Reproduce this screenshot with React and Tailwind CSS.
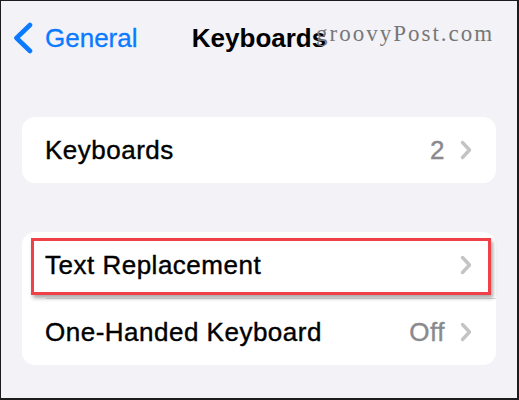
import React from 'react'

function Chevron() {
  return (
    <svg width="12" height="20" viewBox="0 0 12 20" fill="none" stroke="#c4c4c7" strokeWidth="3.4" strokeLinecap="round" strokeLinejoin="round">
      <polyline points="2.5,2.5 9.5,10 2.5,17.5" />
    </svg>
  )
}

function Row({ label, value, highlight }) {
  return (
    <div className="relative h-[66px] flex items-center pl-[23px] pr-[24px]">
      <span className="flex-1 text-[26px] tracking-[0.5px] text-black leading-none [-webkit-text-stroke:0.4px]">{label}</span>
      {value && (
        <span className="text-[26px] tracking-[0.5px] text-[#8a8a8e] leading-none mr-[15px] [-webkit-text-stroke:0.4px]">{value}</span>
      )}
      <Chevron />
      {highlight && (
        <div className="absolute left-[9px] right-[5px] top-[6px] h-[57px] border-[3px] border-[#ef4147] shadow-[2px_3px_4px_rgba(0,0,0,0.35)]" />
      )}
    </div>
  )
}

export default function App() {
  return (
    <div
      className="relative w-[519px] h-[400px] overflow-hidden bg-[#f2f2f7] border-t border-l border-r-2 border-b-2 border-[#1c1c1c]"
      style={{ fontFamily: '"Liberation Sans", Arial, sans-serif' }}
    >
      {/* nav bar */}
      <div className="grid grid-cols-[1fr_auto_1fr] items-center h-[74px]">
        <div className="flex items-center pl-[12px] gap-[12px] text-[#0a7aff]">
          <svg width="20" height="32" viewBox="0 0 20 32" fill="none" stroke="#0a7aff" strokeWidth="4.6" strokeLinecap="round" strokeLinejoin="round">
            <polyline points="17,3 3.5,16 17,29" />
          </svg>
          <span className="text-[26px] leading-none [-webkit-text-stroke:0.3px]">General</span>
        </div>
        <span className="text-[26px] font-bold text-black leading-none">Keyboards</span>
        <div />
      </div>

      {/* watermark */}
      <span
        className="absolute left-[315px] top-[21px] text-[23px] leading-none tracking-[2px] text-[#777777]"
        style={{ fontFamily: '"Liberation Serif", "Times New Roman", serif' }}
      >
        groovyPost.com
      </span>

      <div className="mt-[42px] mx-[21px] bg-white rounded-[13px]">
        <Row label="Keyboards" value="2" />
      </div>

      <div className="mt-[49px] mx-[21px] bg-white rounded-[13px]">
        <Row label="Text Replacement" highlight />
        <div className="ml-[24px] h-px bg-[#dcdce0]" />
        <Row label="One-Handed Keyboard" value="Off" />
      </div>
    </div>
  )
}
